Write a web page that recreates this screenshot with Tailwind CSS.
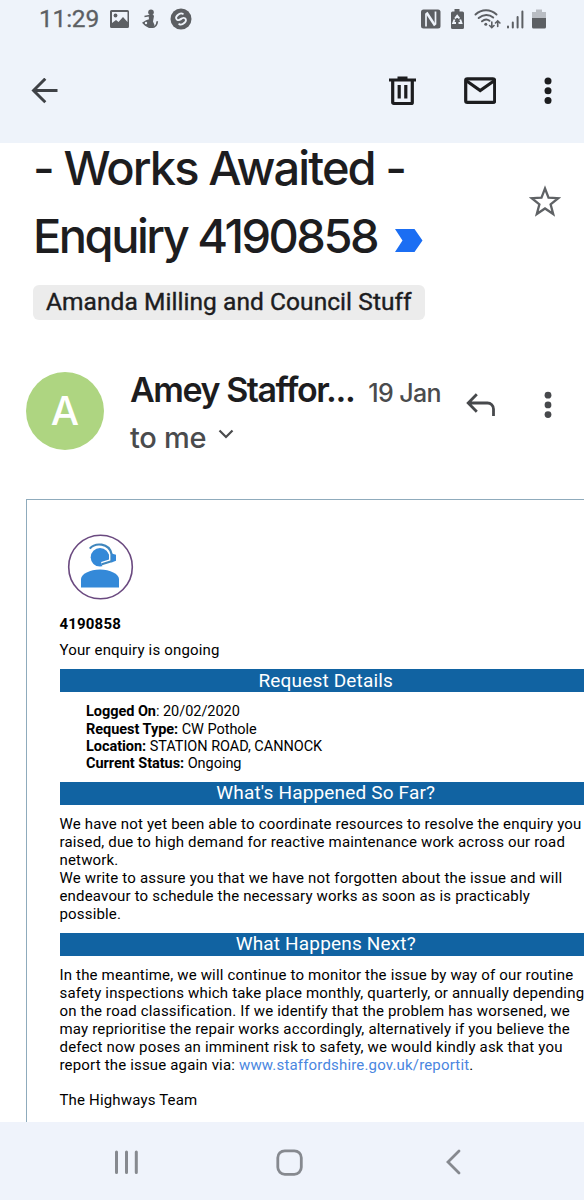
<!DOCTYPE html>
<html lang="en">
<head>
    <meta charset="UTF-8">
    <meta name="viewport" content="width=device-width, initial-scale=1.0">
    <title>Works Awaited - Enquiry 4190858</title>
    <script src="https://cdn.jsdelivr.net/npm/@tailwindcss/browser@4"></script>
</head>
<body class="bg-white font-['Roboto',sans-serif]">
<div class="w-[584px] h-[1200px] flex flex-col overflow-hidden">

    <!-- Status bar + toolbar -->
    <header class="h-[143px] shrink-0 bg-[#eef3fa] relative z-10">
        <div class="h-[38px] pl-[39px] pr-[38px] flex items-center justify-between text-[#5c5f63]">
            <div class="flex items-center">
                <span class="w-[60px] text-[24.5px] leading-[38px] tracking-[-0.2px] whitespace-nowrap [-webkit-text-stroke:0.3px_#5c5f63]">11:29</span>
                <svg class="ml-[10px]" width="21" height="20" viewBox="0 0 21 20"><path fill="currentColor" fill-rule="evenodd" d="M2.500 1h16a1.500 1.500 0 0 1 1.500 1.500v15a1.500 1.500 0 0 1-1.500 1.500h-16a1.500 1.500 0 0 1-1.500-1.500v-15a1.500 1.500 0 0 1 1.500-1.500zM3 3v11l4-3 2.500 2 4.500-5 4.500 5V3z"/><circle cx="6.500" cy="6.500" r="1.900" fill="currentColor"/></svg>
                <svg class="ml-[11px]" width="20" height="20" viewBox="0 0 20 20" fill="currentColor"><circle cx="10" cy="3.200" r="2.800"/><path d="M7.500 6l4.500-.5 1 1.500-1 5.500 1.500 3.500-1.500 3H8l-4-2.200-3-3 4-2.500 3-1z"/><path d="M3.500 7.500L9 6.500" stroke="currentColor" stroke-width="1.500"/><path d="M10 18.200c4 .3 6-2 6.300-6" fill="none" stroke="currentColor" stroke-width="1.700"/><circle cx="5" cy="14" r="1.200" fill="#eef3fa"/></svg>
                <svg class="ml-[9px]" width="22" height="22" viewBox="0 0 22 22"><circle cx="11" cy="11" r="10.500" fill="currentColor"/><path d="M12.800 5.800c-1.800-1-3.600-.2-5.300 1.400-1.800 1.700-1.900 3.400-.4 4.500 1.500 1 2.800.2 4.100-1M9.200 16.200c1.800 1 3.600.2 5.300-1.400 1.800-1.700 1.900-3.400.4-4.500-1.500-1-2.800-.2-4.100 1" fill="none" stroke="#eef3fa" stroke-width="1.900" stroke-linecap="round"/></svg>
            </div>
            <div class="flex items-center">
                <svg width="20" height="20" viewBox="0 0 20 20"><rect x="0" y="0.500" width="19.500" height="19" rx="2.500" fill="currentColor"/><path d="M5 17.500V4.500M14.500 2.500v13" fill="none" stroke="#eef3fa" stroke-width="1.700"/><path d="M5.500 3.500l8.500 13" fill="none" stroke="#eef3fa" stroke-width="2.500"/></svg>
                <svg class="ml-[9px]" width="15" height="20" viewBox="0 0 15 20"><path fill="currentColor" d="M4.500 0h5v2.500h3A1.500 1.500 0 0 1 14 4v14.500a1.500 1.500 0 0 1-1.500 1.500h-10A1.500 1.500 0 0 1 1 18.500V4a1.500 1.500 0 0 1 1.500-1.500h2z"/><path d="M5 9.500L7.200 6.800l2.200 2.700M10.200 10.500l1.200 3.500H8.500M6 14H3.200l1.300-3.500" fill="none" stroke="#eef3fa" stroke-width="1.900"/></svg>
                <svg class="ml-[9px]" width="27" height="20" viewBox="0 0 27 20" fill="none" stroke="currentColor" stroke-width="2" stroke-linecap="round"><path d="M1.500 5.500C7.500-.2 16.500-.2 22.500 5.500M4.700 9c4.500-4 10.500-4 14.500-.5M8 12.300c2.500-2.100 5.500-2.100 7.500-.5"/><circle cx="11.800" cy="15.200" r="1.500" fill="currentColor" stroke="none"/><path stroke-width="1.600" d="M17.800 13v5.500M15.600 16.500l2.200 2.200 2.200-2.200M23.700 17.500V12M21.500 14l2.200-2.200 2.200 2.200"/></svg>
                <svg class="ml-[5px]" width="18" height="20" viewBox="0 0 18 20" fill="none" stroke="currentColor" stroke-width="2" stroke-linecap="round"><path d="M2 17.500v1M6.800 13.500v5M11.600 8v10.500M16.400 2.500v16"/></svg>
                <svg class="ml-[8px]" width="14" height="20" viewBox="0 0 14 20"><path fill="#b9bdc3" d="M4 .5h6V3h4v6H0V3h4z"/><path fill="currentColor" d="M0 9h14v9a1.500 1.500 0 0 1-1.500 1.500h-11A1.500 1.500 0 0 1 0 18z"/></svg>
            </div>
        </div>
        <div class="h-[105px] pl-[31px] pr-[32px] flex items-center text-[#1c1d1f]">
            <svg class="text-[#3f4246]" width="28" height="26" viewBox="0 0 28 26" fill="none" stroke="currentColor" stroke-width="2.900"><path d="M26.500 12.500H2.500M14.300 .7L2.500 12.500l11.800 11.800"/></svg>
            <svg class="ml-[330px]" width="27" height="30" viewBox="0 0 27 30" fill="none" stroke="currentColor" stroke-width="3.200"><path d="M0 4h27M8.500 2h10M3.700 4v22.500a1 1 0 0 0 1 1h17.600a1 1 0 0 0 1-1V4M10.200 9v13.500M16.800 9v13.500"/></svg>
            <svg class="ml-[48px]" width="32" height="27" viewBox="0 0 32 27" fill="none" stroke="currentColor" stroke-width="3.200"><rect x="1.700" y="1.900" width="29" height="23.500" rx="1.700"/><path d="M2 3.500l14.200 10L30.500 3.500"/></svg>
            <svg class="ml-[48px]" width="8" height="28" viewBox="0 0 8 28" fill="currentColor"><circle cx="4" cy="4" r="3.500"/><circle cx="4" cy="13.700" r="3.500"/><circle cx="4" cy="23.400" r="3.500"/></svg>
        </div>
    </header>

    <main class="flex-1 min-h-0 overflow-hidden">
        <!-- Subject -->
        <section class="-mt-[9px] pl-[33px] pr-[23px] flex items-start justify-between font-['Inter','Roboto',sans-serif]">
            <h1 class="text-[47px] leading-[68px] font-medium text-[#1d1d1f] whitespace-nowrap"><span class="tracking-[-1.900px]">- Works Awaited -</span><br><span class="tracking-[-2.500px]">Enquiry 4190858</span><svg class="inline-block ml-[18px] align-[1px]" width="28" height="23" viewBox="0 0 28 23"><path fill="#1b6ef3" d="M0 0h19.500L27.500 11.500 19.500 23H0l7.500-11.500z"/></svg></h1>
            <svg class="mt-[51px]" width="32" height="34" viewBox="0 0 32 34" fill="none" stroke="#5f6265" stroke-width="2.300"><path d="M16 3.500l3.500 9.200 9.700.5-7.600 6.200 2.600 9.600L16 23.500l-8.200 5.500 2.600-9.600-7.600-6.200 9.700-.5z"/></svg>
        </section>
        <div class="ml-[33px] mt-[15px] w-[392px] h-[35px] pl-[13px] rounded-md bg-[#ececec] text-[24.500px] leading-[34px] tracking-[0.060px] text-[#1d1d1f] whitespace-nowrap [-webkit-text-stroke:0.4px_#1d1d1f]">Amanda Milling and Council Stuff</div>

        <!-- Sender -->
        <section class="mt-[52px] h-[78px] pl-[26px] flex font-['Inter','Roboto',sans-serif]">
            <div class="size-[78px] rounded-full bg-[#aed581] text-white text-[40px] leading-[78px] font-medium text-center">A</div>
            <div class="ml-[26px] w-[311px]">
                <div class="flex items-baseline justify-between h-[39px] leading-[35px] whitespace-nowrap">
                    <span class="text-[34px] font-semibold tracking-[-1.450px] text-[#1d1d1f]">Amey Staffor...</span>
                    <span class="text-[25px] font-medium tracking-[-0.600px] text-[#4a4b4d]">19 Jan</span>
                </div>
                <div class="flex items-center mt-[9px] leading-[36px] text-[29px] font-medium text-[#4a4b4d]">
                    <span class="whitespace-nowrap tracking-[-0.300px]">to me</span>
                    <svg class="ml-[12px] -mt-[8px]" width="16" height="10" viewBox="0 0 16 10" fill="none" stroke="currentColor" stroke-width="2.200"><path d="M1.500 1.500L8 8l6.500-6.500"/></svg>
                </div>
            </div>
            <svg class="ml-[25px] mt-[21px]" width="30" height="25" viewBox="0 0 30 25" fill="none" stroke="#47494c" stroke-width="2.800"><path d="M10.800 1.200L2.200 10l8.600 8.800M2.500 10h19a6 6 0 0 1 6 6v7"/></svg>
            <svg class="ml-[48px] mt-[19px]" width="8" height="28" viewBox="0 0 8 28" fill="#47494c"><circle cx="4" cy="4.200" r="3.400"/><circle cx="4" cy="13.900" r="3.400"/><circle cx="4" cy="23.600" r="3.400"/></svg>
        </section>

        <!-- Message body, wider than the screen -->
        <article class="ml-[26px] mt-[49px] w-[600px] h-[700px] pl-[32.500px] pr-[33px] border border-[#8fabbc] text-[15px] leading-[17.9px] tracking-[0.170px] text-black whitespace-nowrap">
            <svg class="mt-[33px] ml-[7.500px]" width="68" height="68" viewBox="0 0 68 68">
                <circle cx="33.500" cy="34" r="31.800" fill="#fff" stroke="#6b4a80" stroke-width="1.600"/>
                <path fill="#3489d8" d="M14 54.500v-8.500c0-5 9-9.500 19-9.500s19 4.500 19 9.500v8.500z"/>
                <circle cx="33" cy="24.300" r="9.300" fill="#3489d8"/>
                <path d="M22.800 15.600C28 9.500 42 9.500 44.500 21v7.300L34.800 31.300" fill="none" stroke="#fff" stroke-width="5"/>
                <path d="M22.800 15.600C28 9.500 42 9.500 44.500 21v7.300L34.800 31.300" fill="none" stroke="#3f86bd" stroke-width="2.200"/>
                <path fill="#3489d8" d="M44.500 20.500l4.500 1.200v6l-4.500 1.800z"/>
            </svg>
            <p class="mt-[14.500px] font-bold">4190858</p>
            <p class="mt-[8.500px]">Your enquiry is ongoing</p>
            <h2 class="mt-[9.500px] h-[22.500px] bg-[#1163a2] text-white text-[19px] leading-[23.500px] text-center">Request Details</h2>
            <div class="mt-[11.600px] pl-[26.500px] text-[14.500px] leading-[17.3px] tracking-[-0.040px]">
                <p><b>Logged On</b>: 20/02/2020</p>
                <p><b>Request Type:</b> CW Pothole</p>
                <p><b>Location:</b> STATION ROAD, CANNOCK</p>
                <p><b>Current Status:</b> Ongoing</p>
            </div>
            <h2 class="mt-[9.600px] h-[22.500px] bg-[#1163a2] text-white text-[19px] leading-[22px] text-center">What's Happened So Far?</h2>
            <p class="mt-[11.800px]">
                We have not yet been able to coordinate resources to resolve the enquiry you<br>
                raised, due to high demand for reactive maintenance work across our road<br>
                network.<br>
                We write to assure you that we have not forgotten about the issue and will<br>
                endeavour to schedule the necessary works as soon as is practicably<br>
                possible.
            </p>
            <h2 class="mt-[9.200px] h-[22.500px] bg-[#1163a2] text-white text-[19px] leading-[22px] text-center">What Happens Next?</h2>
            <p class="mt-[11.700px]">
                In the meantime, we will continue to monitor the issue by way of our routine<br>
                safety inspections which take place monthly, quarterly, or annually depending<br>
                on the road classification. If we identify that the problem has worsened, we<br>
                may reprioritise the repair works accordingly, alternatively if you believe the<br>
                defect now poses an imminent risk to safety, we would kindly ask that you<br>
                report the issue again via: <a class="text-[#4a86e0]">www.staffordshire.gov.uk/reportit</a>.
            </p>
            <p class="mt-[17.500px]">The Highways Team</p>
        </article>
    </main>

    <!-- Navigation bar -->
    <nav class="h-[78px] shrink-0 pt-[2px] pl-[114px] bg-[#eff3fb] flex items-center text-[#86898f]">
        <svg width="25" height="26" viewBox="0 0 25 26" stroke="currentColor" stroke-width="3" stroke-linecap="round"><path d="M2.500 3v20.500M12.500 3v20.500M22.300 3v20.500"/></svg>
        <svg class="ml-[137px]" width="27" height="27" viewBox="0 0 27 27" fill="none" stroke="currentColor" stroke-width="2.800"><rect x="1.800" y="1.800" width="23.500" height="23.500" rx="7"/></svg>
        <svg class="ml-[143px]" width="15" height="26" viewBox="0 0 15 26" fill="none" stroke="currentColor" stroke-width="2.800" stroke-linecap="round"><path d="M13 2L2 13l11 11"/></svg>
    </nav>
</div>
</body>
</html>
